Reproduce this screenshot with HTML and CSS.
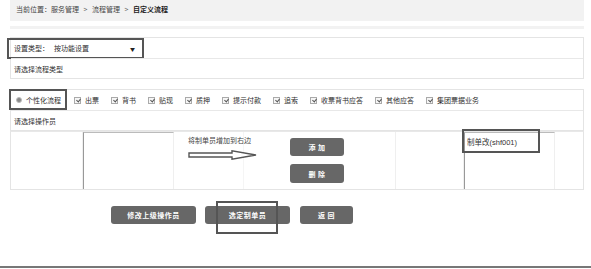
FILE: index.html
```html
<!DOCTYPE html>
<html lang="zh">
<head>
<meta charset="utf-8">
<link rel="stylesheet" href="styles.css">
</head>
<body>
<div class="page">
  <div class="crumb">当前位置：服务管理<span class="sep">&gt;</span>流程管理<span class="sep">&gt;</span><b>自定义流程</b></div>
  <div class="strip"></div>

  <div class="box box1">
    <div class="row">
      <span class="label">设置类型：</span>
      <span class="select"><span>按功能设置</span><span class="caret">▼</span></span>
      <span class="hl hl-select"></span>
    </div>
    <div class="row">请选择流程类型</div>
  </div>

  <div class="box box2">
    <div class="row checks">
      <span class="opt radio"><i class="dot"></i>个性化流程<span class="hl hl-radio"></span></span>
      <span class="opt"><i class="cb"></i>出票</span>
      <span class="opt"><i class="cb"></i>背书</span>
      <span class="opt"><i class="cb"></i>贴现</span>
      <span class="opt"><i class="cb"></i>质押</span>
      <span class="opt"><i class="cb"></i>提示付款</span>
      <span class="opt"><i class="cb"></i>追索</span>
      <span class="opt"><i class="cb"></i>收票背书应答</span>
      <span class="opt"><i class="cb"></i>其他应答</span>
      <span class="opt"><i class="cb"></i>集团票据业务</span>
    </div>
    <div class="row">请选择操作员</div>
  </div>

  <div class="table">
    <div class="cell"></div>
    <div class="cell list"></div>
    <div class="cell hint">
      <div class="hint-text">将制单员增加到右边</div>
      <svg class="arrow" width="70" height="10" viewBox="0 0 70 10">
        <path d="M1 3 H44 V0.8 L68 5 L44 9.2 V7 H1 Z" fill="#fff" stroke="#555" stroke-width="1.4"/>
      </svg>
    </div>
    <div class="cell btns">
      <span class="btn">添 加</span>
      <span class="btn">删 除</span>
    </div>
    <div class="cell"></div>
    <div class="cell list right">
      <div class="item">制单改(shf001)</div>
      <span class="hl hl-item"></span>
    </div>
    <div class="cell"></div>
  </div>

  <div class="actions">
    <span class="btn wide">修改上级操作员</span>
    <span class="btn wide2">选定制单员<span class="hl hl-btn"></span></span>
    <span class="btn back">返 回</span>
  </div>
</div>
<div class="bottom-line"></div>
</body>
</html>
```

FILE: styles.css
```css
* { box-sizing: border-box; }
html, body { margin: 0; padding: 0; background: #fff; }
body {
  font-family: "Noto Sans CJK SC", "DejaVu Sans", sans-serif;
  font-size: 7px;
  color: #2e2e2e;
  width: 591px;
  height: 269px;
  overflow: hidden;
  position: relative;
}
.page { padding: 0 7px 0 10px; position: relative; height: 266px; }
.crumb {
  height: 21px;
  background: #f2f2f2;
  padding-left: 6px;
  line-height: 19px;
  color: #444;
}
.crumb .sep { display: inline-block; width: 13px; text-align: center; color: #666; }
.crumb b { font-weight: bold; color: #222; }
.strip { height: 3px; background: #f2f2f2; margin-top: 5px; }

.box { border: 1px solid #e4e4e4; }
.box1 { margin-top: 8px; }
.box2 { margin-top: 10px; }
.row {
  height: 20px;
  display: flex;
  align-items: center;
  padding-left: 3px;
  position: relative;
}
.row + .row { border-top: 1px solid #e8e8e8; }
.label { width: 35px; margin-right: 5px; }
.select { display: flex; width: 81px; justify-content: space-between; align-items: center; }
.caret { font-size: 5px; color: #222; }

.hl { position: absolute; border: 2.5px solid #555; pointer-events: none; }
.hl-select { left: -4px; top: 0px; width: 137px; height: 21px; }
.hl-radio { left: -7px; top: -6px; width: 58px; height: 21px; }
.hl-item { left: -3px; top: -4px; width: 78px; height: 24px; }
.hl-btn { left: 11px; top: -5px; width: 62px; height: 33px; }

.opt { display: inline-flex; align-items: center; position: relative; margin-right: 12px; }
.opt.radio { margin-left: 2px; margin-right: 13px; }
.dot {
  width: 6px; height: 6px; border-radius: 50%;
  background: #888; border: 1px solid #bbb; margin-right: 4px;
}
.cb {
  width: 7px; height: 7px; border: 1px solid #aaa; margin-right: 4px;
  position: relative; background: #f6f6f6;
}
.cb::after {
  content: ""; position: absolute; left: 1.5px; top: 0px;
  width: 2px; height: 3px; border: solid #555; border-width: 0 1px 1px 0;
  transform: rotate(40deg);
}

.table {
  height: 59px;
  border: 1px solid #e4e4e4;
  border-top: 1px solid #e8e8e8;
  display: grid;
  grid-template-columns: 72px 91px 70px 152px 68px 91px 1fr;
}
.cell { border-right: 1px solid #efefef; position: relative; }
.cell:last-child { border-right: none; }
.list { border-left: 1px solid #999; border-top: 1px solid #bbb; background: #fff; }
.right { padding: 3px 0 0 2px; }
.item { color: #333; font-family: "Liberation Sans", "Noto Sans CJK SC", sans-serif; font-size: 7.5px; }
.hint { padding: 3px 0 0 14px; border-right-color: #f5f5f5; white-space: nowrap; }
.hint-text { color: #444; }
.arrow { display: block; margin-top: 5px; }
.btns {
  display: flex; flex-direction: column; align-items: flex-start;
  padding: 6px 0 0 46px; gap: 8px;
}
.btn {
  display: inline-flex; align-items: center; justify-content: center;
  background: #676767; color: #fff; border-radius: 3px;
  width: 54px; height: 18px; font-size: 7px; position: relative;
  letter-spacing: 0.5px; font-weight: 600;
}
.btns .btn + .btn { height: 19px; }

.actions {
  display: flex; gap: 9px; padding-left: 101px; margin-top: 16px;
}
.actions .btn { height: 18px; }
.wide { width: 85px; }
.wide2 { width: 85px; }
.back { width: 53px; margin-left: 1px; }
.bottom-line { height: 2px; background: #777; margin-top: 0; }
```
